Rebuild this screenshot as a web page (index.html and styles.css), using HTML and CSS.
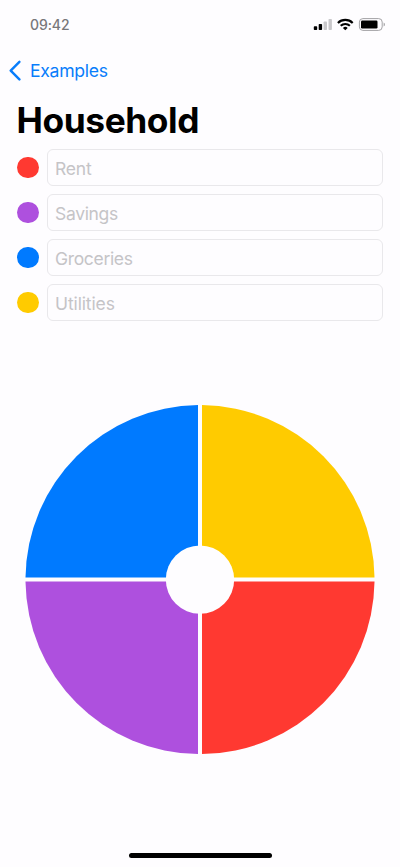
FILE: index.html
```html
<!DOCTYPE html>
<html lang="en">
<head>
<meta charset="utf-8">
<meta name="viewport" content="width=device-width, initial-scale=1">
<title>Household</title>
<link rel="stylesheet" href="styles.css">
</head>
<body>
<div class="screen">
  <header class="status">
    <span class="time">09:42</span>
    <svg class="indicators" width="74" height="16" viewBox="0 0 74 16" aria-hidden="true">
      <g fill="#000">
        <rect x=".8" y="9.2" width="3.4" height="3.9" rx=".8"/>
        <rect x="5.7" y="7" width="3.4" height="6.1" rx=".8"/>
      </g>
      <g fill="#c9c8cb">
        <rect x="10.6" y="4.4" width="3.4" height="8.7" rx=".8"/>
        <rect x="15.5" y="2" width="3.4" height="11.1" rx=".8"/>
      </g>
      <g fill="none" stroke="#000" stroke-width="2.1">
        <path d="M24.9 5.9a10.6 10.6 0 0 1 14.8 0"/>
        <path d="M27.7 8.8a6.6 6.6 0 0 1 9.2 0"/>
      </g>
      <path d="M29.9 10.9a3.5 3.5 0 0 1 4.8 0L32.3 13.3z"/>
      <rect x="46.4" y="1.6" width="22.8" height="11.8" rx="3.5" fill="none" stroke="#a3a2a5"/>
      <rect x="48" y="3.6" width="16.5" height="7.8" rx="1.2"/>
      <path d="M70.6 5.5c1.8.7 1.8 3.3 0 4z" fill="#a3a2a5"/>
    </svg>
  </header>
  <nav class="nav">
    <svg width="14" height="22" viewBox="0 0 14 22" aria-hidden="true"><path d="M12.4 1.8 3.7 10.6l8.7 8.8" fill="none" stroke="#087dfb" stroke-width="2.4" stroke-linecap="round" stroke-linejoin="round"/></svg>
    <span class="back">Examples</span>
  </nav>
  <h1 class="title">Household</h1>
  <form class="fields">
    <label class="row"><span class="dot red"></span><input class="field rent" placeholder="Rent"></label>
    <label class="row"><span class="dot purple"></span><input class="field savings" placeholder="Savings"></label>
    <label class="row"><span class="dot blue"></span><input class="field groceries" placeholder="Groceries"></label>
    <label class="row"><span class="dot yellow"></span><input class="field utilities" placeholder="Utilities"></label>
  </form>
  <svg class="chart" width="350" height="350" viewBox="-175 -174.6 350 350" aria-hidden="true">
    <path d="M-2-2V-174.5A174.5 174.5 0 0 0-174.5-2z" fill="#007aff"/>
    <path d="M2-2V-174.5A174.5 174.5 0 0 1 174.5-2z" fill="#ffcb00"/>
    <path d="M2 2V174.5A174.5 174.5 0 0 0 174.5 2z" fill="#ff3931"/>
    <path d="M-2 2V174.5A174.5 174.5 0 0 1-174.5 2z" fill="#ae50de"/>
    <circle r="34.2" fill="#fefdff"/>
  </svg>
  <div class="home"></div>
</div>
</body>
</html>
```
FILE: styles.css
```css
* { box-sizing: border-box; }
body {
  margin: 0;
  background: #fefdff;
  font-family: Inter, "Liberation Sans", sans-serif;
}
.screen {
  height: 867px;
  display: flex;
  flex-direction: column;
  overflow: hidden;
}
.status {
  height: 50px;
  padding: 0 13px 1px 30px;
  display: flex;
  align-items: center;
  justify-content: space-between;
}
.time {
  font-size: 14px;
  font-weight: 500;
  letter-spacing: -.1px;
  color: #78777a;
}
.nav {
  height: 42px;
  padding: 0 0 1px 7px;
  display: flex;
  align-items: center;
  gap: 9px;
}
.back {
  font-size: 17.6px;
  letter-spacing: -.3px;
  color: #087dfb;
}
.title {
  margin: 0;
  height: 57px;
  padding-left: 16.5px;
  font-size: 35.3px;
  line-height: 57px;
  font-weight: 700;
  letter-spacing: -.4px;
  color: #000;
}
.fields {
  padding: 0 17px;
  display: grid;
  gap: 8px;
}
.row {
  display: flex;
  align-items: center;
  gap: 8.5px;
}
.dot {
  width: 21.5px;
  height: 21.5px;
  border-radius: 50%;
}
.red { background: #ff3931; }
.purple { background: #ae50de; }
.blue { background: #007aff; }
.yellow { background: #ffcb00; }
.field {
  flex: 1;
  min-width: 0;
  height: 37px;
  padding: 1px 7px 0;
  border: 1px solid #e9e8eb;
  border-radius: 6px;
  background: transparent;
  font: 400 17.5px Inter, "Liberation Sans", sans-serif;
  letter-spacing: -.33px;
}
.rent { letter-spacing: -.2px; }
.utilities { letter-spacing: -.12px; }
.field::placeholder { color: #c5c4c7; }
.chart {
  margin: 84px 0 0 25px;
  flex: none;
}
.home {
  width: 143px;
  height: 5px;
  margin: auto auto 9px;
  border-radius: 3px;
  background: #000;
}
```
